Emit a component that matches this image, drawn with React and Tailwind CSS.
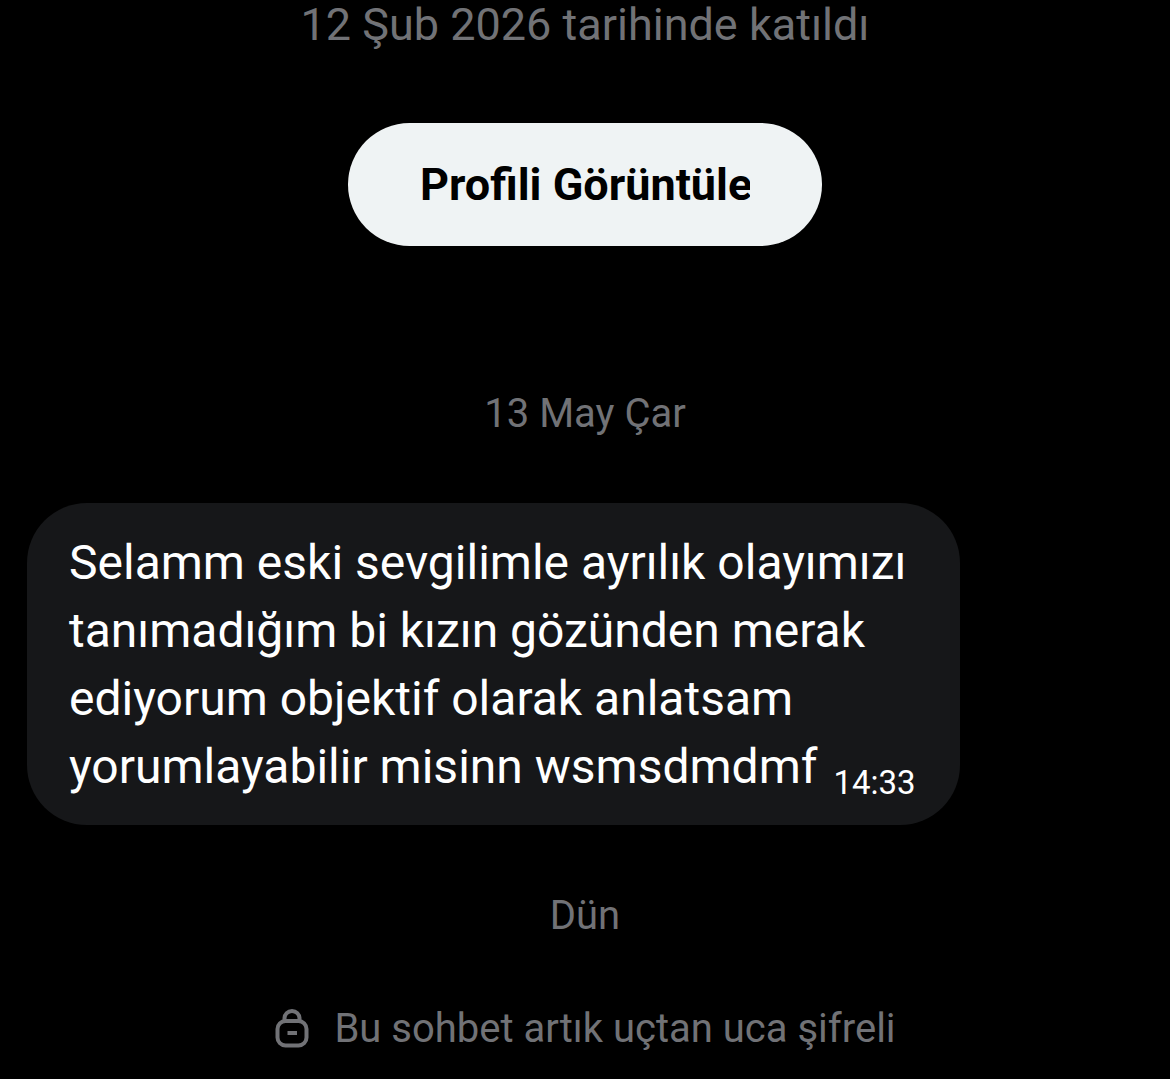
function DateDivider({ children, className = '' }) {
  return <p className={`text-center text-[40px] leading-[48px] text-[#717276] ${className}`}>{children}</p>;
}

function LockIcon() {
  return (
    <svg className="h-10 w-9 flex-none" viewBox="0 0 36 40" fill="none" stroke="currentColor" strokeWidth="4" aria-hidden="true">
      <path d="M10.500 12V9.500a7.500 7.500 0 0 1 15 0V12" />
      <rect x="3.500" y="12" width="29" height="24.500" rx="8" />
      <path d="M13.500 24h9.500" />
    </svg>
  );
}

// The time sits after the last word, slightly below its baseline
function Message({ text, time }) {
  return (
    <div className="w-[933px] max-w-full rounded-[60px] bg-[#161719] pt-[26px] pr-10 pb-6 pl-[42px] text-white">
      <p className="text-[48px] leading-[68px]">
        {text}
        <time className="ml-4 inline-block align-[-11px] text-[33px] leading-8">{time}</time>
      </p>
    </div>
  );
}

export default function App() {
  return (
    <main className="flex min-h-screen flex-col bg-black font-['Roboto',sans-serif]">
      <p className="text-center text-[45px] leading-[50px] text-[#717276]">12 Şub 2026 tarihinde katıldı</p>
      <button className="mt-[73px] h-[123px] w-[474px] self-center rounded-full bg-[#eff3f4] px-[72px] text-left text-[45px] font-bold text-black">
        <span className="block overflow-hidden whitespace-nowrap">Profili Görüntüle</span>
      </button>
      <DateDivider className="mt-[144px]">13 May Çar</DateDivider>
      <div className="mt-[65px] px-[27px]">
        <Message
          text="Selamm eski sevgilimle ayrılık olayımızı tanımadığım bi kızın gözünden merak ediyorum objektif olarak anlatsam yorumlayabilir misinn wsmsdmdmf"
          time="14:33"
        />
      </div>
      <DateDivider className="mt-[67px]">Dün</DateDivider>
      <div className="mt-[65px] flex items-center justify-center gap-6 text-[40px] leading-[48px] text-[#717276]">
        <LockIcon />
        <p>Bu sohbet artık uçtan uca şifreli</p>
      </div>
    </main>
  );
}
